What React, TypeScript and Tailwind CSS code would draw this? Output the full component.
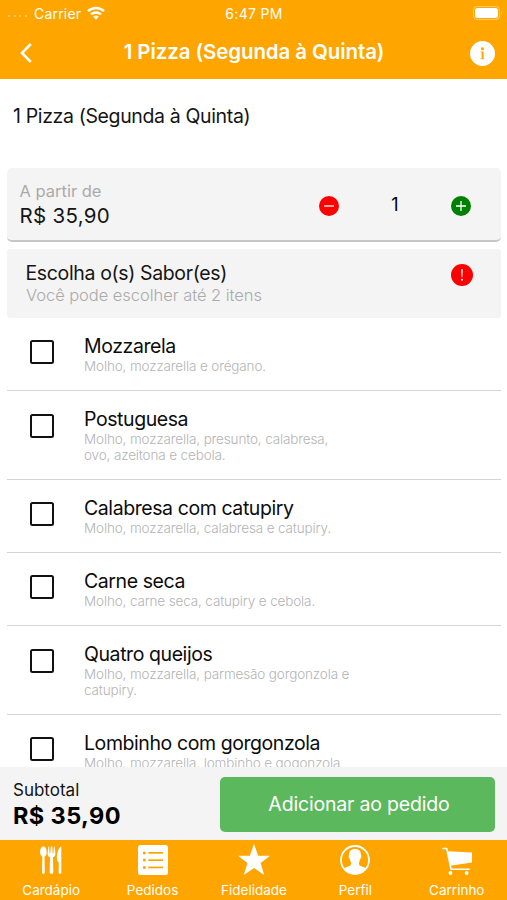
import type { ReactNode } from 'react';

interface Flavor {
  name: string;
  description: string[];
}

const flavors: Flavor[] = [
  { name: 'Mozzarela', description: ['Molho, mozzarella e orégano.'] },
  {
    name: 'Postuguesa',
    description: ['Molho, mozzarella, presunto, calabresa,', 'ovo, azeitona e cebola.'],
  },
  { name: 'Calabresa com catupiry', description: ['Molho, mozzarella, calabresa e catupiry.'] },
  { name: 'Carne seca', description: ['Molho, carne seca, catupiry e cebola.'] },
  {
    name: 'Quatro queijos',
    description: ['Molho, mozzarella, parmesão gorgonzola e', 'catupiry.'],
  },
  { name: 'Lombinho com gorgonzola', description: ['Molho, mozzarella, lombinho e gogonzola'] },
];

const tabs: { label: string; icon: ReactNode }[] = [
  {
    label: 'Cardápio',
    icon: (
      <svg className="h-[30px] w-[30px]" viewBox="0 0 30 30" fill="currentColor">
        <path d="M7.400 1.600c2 0 3.300 2.700 3.300 5.500 0 2.200-.9 3.900-2.200 4.700l.3 15.600c0 .9-.6 1.300-1.400 1.300s-1.400-.4-1.400-1.300l.3-15.600c-1.300-.8-2.200-2.500-2.200-4.700 0-2.800 1.300-5.500 3.300-5.500z" />
        <path d="M12.300 1.600h.8l.5 6.700h.7l.5-6.700h1.400l.5 6.700h.7l.5-6.700h.8l.7 7.100c.1 1.900-.8 3.100-2.400 3.600l.3 15.100c0 .9-.8 1.300-1.800 1.300s-1.800-.4-1.800-1.300l.3-15.100c-1.600-.5-2.500-1.700-2.400-3.600z" />
        <path d="M25.300 1.400v26c0 .9-.6 1.300-1.300 1.300s-1.400-.4-1.400-1.300l.2-10c-1.300-.8-1.900-2-1.900-4 0-5.400 1.600-11 4.400-12z" />
      </svg>
    ),
  },
  {
    label: 'Pedidos',
    icon: (
      <svg className="h-[30px] w-[30px]" viewBox="0 0 30 30">
        <rect width="30" height="30" rx="2.500" fill="currentColor" />
        <g fill="#ffa500">
          <circle cx="6.300" cy="7.900" r="1.500" />
          <circle cx="6.300" cy="15" r="1.500" />
          <circle cx="6.300" cy="22.500" r="1.500" />
          <rect x="10.300" y="7" width="14.700" height="1.700" />
          <rect x="10.300" y="14.300" width="14.700" height="1.700" />
          <rect x="10.300" y="21.600" width="14.700" height="1.700" />
        </g>
      </svg>
    ),
  },
  {
    label: 'Fidelidade',
    icon: (
      <svg className="h-[32px] w-[34px]" viewBox="0 0 34 32" fill="currentColor">
        <path d="M17 0l4.200 11.800H33L23.600 19l3.600 12L17 23.900 6.800 31l3.600-12L1 11.800h11.800z" />
      </svg>
    ),
  },
  {
    label: 'Perfil',
    icon: (
      <svg className="h-[30px] w-[30px]" viewBox="0 0 30 30">
        <circle cx="15" cy="15" r="14" fill="none" stroke="currentColor" strokeWidth="1.800" />
        <path
          fill="currentColor"
          d="M15 4c4 0 6.100 2.300 5.900 5.900.8.300.6 2.900-.5 3.600-.3 2-1 3-1.400 3.900-.2 2 .2 3 1.600 3.700 1.700.7 3.500 1.100 4.900 2.100C23.300 26.800 19.500 29 15 29s-8.300-2.200-10.500-5.800c1.400-1 3.200-1.400 4.900-2.100 1.400-.7 1.800-1.700 1.600-3.700-.4-.9-1.100-1.900-1.400-3.900-1.100-.7-1.300-3.300-.5-3.600C8.900 6.300 11 4 15 4z"
        />
      </svg>
    ),
  },
  {
    label: 'Carrinho',
    icon: (
      <svg className="h-[30px] w-[30px]" viewBox="0 0 30 30">
        <path
          d="M1 3.500h3.700l4.400 20.800h18"
          fill="none"
          stroke="currentColor"
          strokeWidth="1.600"
          strokeLinejoin="round"
          strokeLinecap="round"
        />
        <path d="M5.500 6.200L30 7.400v10.200L8.200 20.800z" fill="currentColor" />
        <circle cx="8.400" cy="28" r="1.900" fill="currentColor" />
        <circle cx="24.600" cy="28" r="1.900" fill="currentColor" />
      </svg>
    ),
  },
];

function StatusBar() {
  return (
    <div className="flex h-[26px] items-center justify-between pr-[5px] pl-[8px] text-[14px]">
      <div className="flex flex-1 items-center">
        <span className="flex gap-[3.500px] pt-[6px] opacity-40">
          {[0, 1, 2, 3].map((dot) => (
            <span key={dot} className="h-[2px] w-[2px] bg-white" />
          ))}
        </span>
        <span className="ml-[7.500px] tracking-[0.2px]">Carrier</span>
        <svg className="ml-[6px] h-[14px] w-[18px]" viewBox="0 0 18 14" fill="none" stroke="white">
          <path d="M1 5.200a11.500 11.500 0 0 1 16 0" strokeWidth="2.500" />
          <path d="M4 8.500a7.200 7.200 0 0 1 10 0" strokeWidth="2.400" />
          <path d="M9 13.700l-2.700-2.900a3.900 3.900 0 0 1 5.400 0z" fill="white" stroke="none" />
        </svg>
      </div>
      <span className="mr-[2px] tracking-[0.3px]">6:47 PM</span>
      <div className="flex flex-1 items-center justify-end gap-[1px]">
        <div className="h-[14px] w-[27px] rounded-[4px] border border-white/40 p-[1px]">
          <div className="h-full rounded-[2.500px] bg-white" />
        </div>
        <div className="h-[4px] w-[1.500px] rounded-r bg-white/40" />
      </div>
    </div>
  );
}

function Header() {
  return (
    <header className="h-[79px] shrink-0 bg-[#ffa500] text-white">
      <StatusBar />
      <div className="flex h-[53px] items-center justify-between pr-[12px] pl-[20px]">
        <svg className="h-[20px] w-[12px]" viewBox="0 0 12 20" fill="none" stroke="white">
          <path d="M10.800 1L2 10l8.800 9" strokeWidth="2.600" />
        </svg>
        <h1 className="ml-[6px] text-[20.500px] font-semibold tracking-[-0.1px]">
          1 Pizza (Segunda à Quinta)
        </h1>
        <svg className="mt-[1px] h-[25px] w-[25px]" viewBox="0 0 25 25">
          <circle cx="12.500" cy="12.500" r="12.500" fill="white" />
          <g fill="#ffa500">
            <circle cx="12.400" cy="7.800" r="1.500" />
            <path d="M10.600 10.400h3v7h.9v.9h-4v-.9h1.100v-6.100h-1z" />
          </g>
        </svg>
      </div>
    </header>
  );
}

function PriceCard() {
  return (
    <div className="mr-[6px] ml-[7px] flex h-[74px] items-center rounded-[5px] border-b-2 border-[#c6c6c6] bg-[#f4f4f4] pl-[13px]">
      <div className="w-[299px]">
        <p className="-ml-[0.500px] text-[16.500px] leading-[23px] text-[#aaaaaa]">A partir de</p>
        <p className="-ml-[0.500px] text-[20.500px] leading-[25px] tracking-[0.3px] text-[#151515]">
          R$ 35,90
        </p>
      </div>
      <svg className="mt-[3px] h-[20px] w-[20px]" viewBox="0 0 20 20">
        <circle cx="10" cy="10" r="10" fill="#ff0000" />
        <path d="M5 10h10" stroke="white" strokeWidth="1.300" />
      </svg>
      <span className="w-[112px] text-center text-[18px]">1</span>
      <svg className="mt-[3px] h-[20px] w-[20px]" viewBox="0 0 20 20">
        <circle cx="10" cy="10" r="10" fill="#008000" />
        <path d="M5 10h10M10 5v10" stroke="white" strokeWidth="1.300" />
      </svg>
    </div>
  );
}

function SectionHeader() {
  return (
    <div className="mt-[7px] mr-[6px] ml-[7px] flex h-[69px] justify-between rounded-[3px] bg-[#f4f4f4] pt-[12px] pr-[28px] pl-[19px]">
      <div>
        <h2 className="-ml-[0.500px] text-[19.500px] leading-[24px] tracking-[-0.36px] text-[#151515]">
          Escolha o(s) Sabor(es)
        </h2>
        <p className="text-[16.500px] leading-[20px] font-light tracking-[-0.05px] text-[#aaaaaa]">
          Você pode escolher até 2 itens
        </p>
      </div>
      <svg className="mt-[2.500px] h-[22px] w-[22px]" viewBox="0 0 22 22">
        <circle cx="11" cy="11" r="11" fill="#ff0000" />
        <path d="M10.200 5.300h1.600l-.4 8h-.8z" fill="white" />
        <circle cx="11" cy="15.700" r="1" fill="white" />
      </svg>
    </div>
  );
}

function FlavorRow({ name, description }: Flavor) {
  return (
    <li className="mr-[6px] ml-[7px] flex border-b border-[#d4d4d4] pt-[16.200px] pb-[15.600px] pl-[23px]">
      <span className="mt-[6.200px] h-[24px] w-[24px] shrink-0 rounded-[2.500px] border-2 border-[#111111]" />
      <div className="ml-[30px]">
        <h3 className="text-[19.500px] leading-[24px] tracking-[-0.42px] text-[#0c0c0c]">{name}</h3>
        <p className="pt-[0.800px] text-[13.500px] leading-[15.600px] font-light tracking-[-0.14px] whitespace-nowrap text-[#b4b4b4]">
          {description.map((line) => (
            <span key={line} className="block">
              {line}
            </span>
          ))}
        </p>
      </div>
    </li>
  );
}

export default function App() {
  return (
    <div className="flex h-[900px] w-[507px] flex-col overflow-hidden bg-white font-['Inter',sans-serif]">
      <Header />

      <main className="min-h-0 flex-1 overflow-hidden">
        <p className="h-[89px] pt-[24px] pl-[13px] text-[19.500px] leading-[26px] tracking-[-0.36px] text-[#151515]">
          1 Pizza (Segunda à Quinta)
        </p>
        <PriceCard />
        <SectionHeader />
        <ul>
          {flavors.map((flavor) => (
            <FlavorRow key={flavor.name} {...flavor} />
          ))}
        </ul>
      </main>

      <div className="flex h-[73px] shrink-0 items-center justify-between bg-[#f4f4f4] pr-[12px] pl-[13px]">
        <div className="pb-[1px]">
          <p className="text-[17px] leading-[25px] text-[#151515]">Subtotal</p>
          <p className="text-[23.500px] leading-[26px] font-bold tracking-[0.4px] text-black">
            R$ 35,90
          </p>
        </div>
        <button className="mt-[2px] h-[55px] w-[275px] rounded-[5px] bg-[#5cb85c] pt-[1px] pl-[3px] text-[19.500px] tracking-[-0.18px] text-white">
          Adicionar ao pedido
        </button>
      </div>

      <nav className="grid h-[60px] shrink-0 grid-cols-5 bg-[#ffa500] text-white">
        {tabs.map(({ label, icon }) => (
          <a key={label} className="flex flex-col items-center pt-[4px] pl-[1px]">
            <span className="flex h-[32px] items-center justify-center">{icon}</span>
            <span className="mt-[5px] text-[13.500px] leading-[18px]">{label}</span>
          </a>
        ))}
      </nav>
    </div>
  );
}
